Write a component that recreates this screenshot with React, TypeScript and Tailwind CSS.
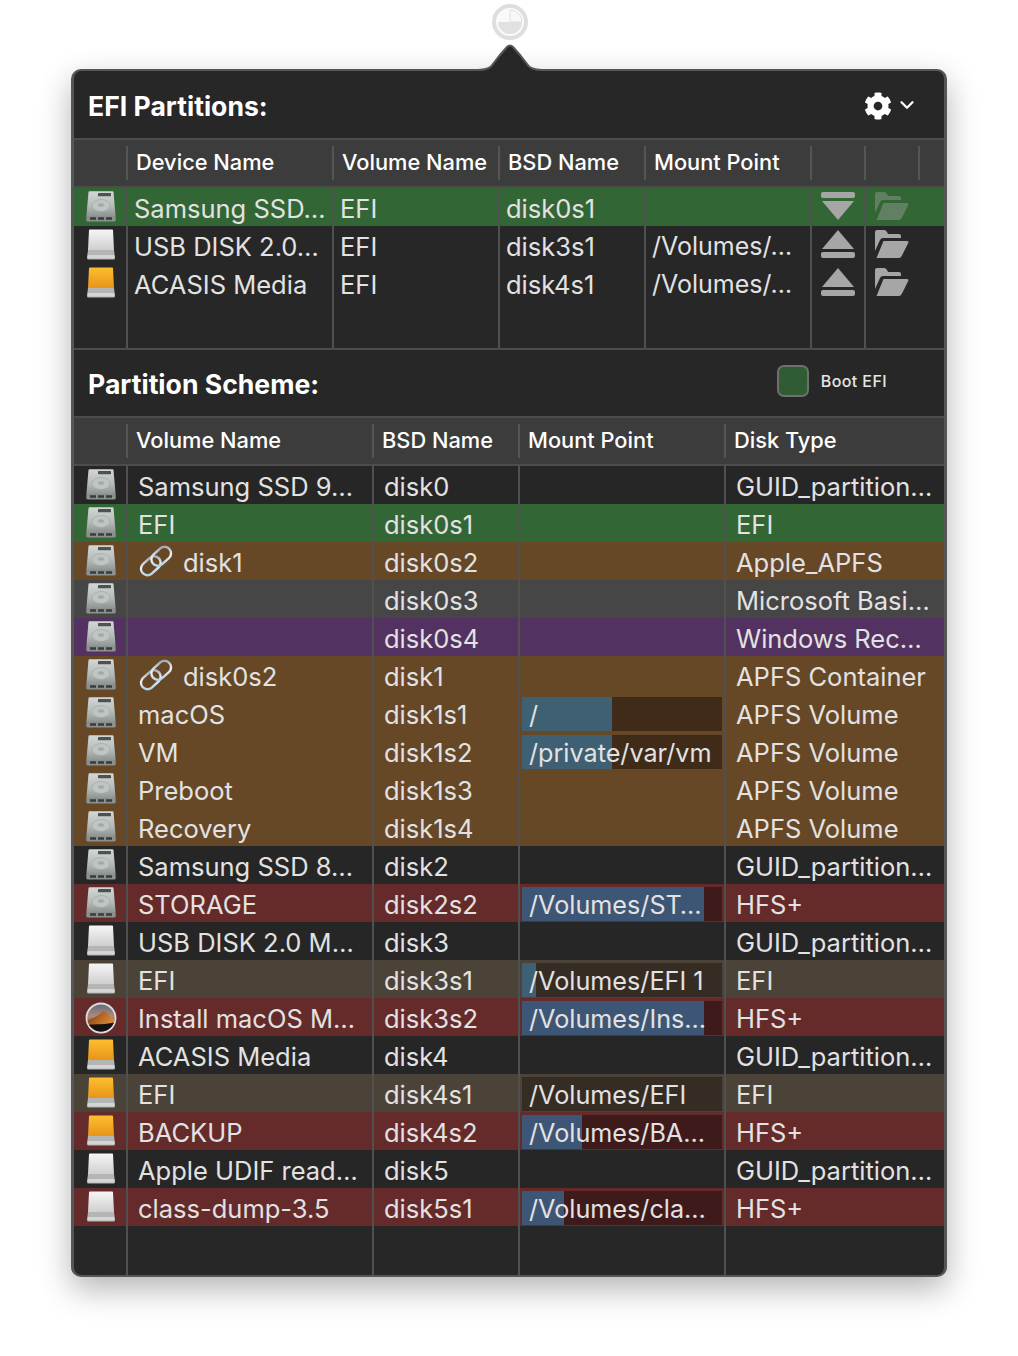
import React from 'react';
import { FaCog } from 'react-icons/fa';
import { ChevronDown } from 'lucide-react';

type DiskKind = 'hdd' | 'usb' | 'orange' | 'mojave';

interface SchemeRow {
  icon: DiskKind;
  name: string;
  link?: boolean;
  bsd: string;
  mount?: string;
  used?: number;
  type: string;
  tone: string;
}

const DARK = 'bg-[#262626]';
const GREEN = 'bg-[#336635]';
const BROWN = 'bg-[#664827]';
const GRAY = 'bg-[#464646]';
const PURPLE = 'bg-[#533261]';
const RED = 'bg-[#652b2b]';
const BEIGE = 'bg-[#4b4238]';

const rows: SchemeRow[] = [
  { icon: 'hdd', name: 'Samsung SSD 9…', bsd: 'disk0', type: 'GUID_partition…', tone: DARK },
  { icon: 'hdd', name: 'EFI', bsd: 'disk0s1', type: 'EFI', tone: GREEN },
  { icon: 'hdd', name: 'disk1', link: true, bsd: 'disk0s2', type: 'Apple_APFS', tone: BROWN },
  { icon: 'hdd', name: '', bsd: 'disk0s3', type: 'Microsoft Basi…', tone: GRAY },
  { icon: 'hdd', name: '', bsd: 'disk0s4', type: 'Windows Rec…', tone: PURPLE },
  { icon: 'hdd', name: 'disk0s2', link: true, bsd: 'disk1', type: 'APFS Container', tone: BROWN },
  { icon: 'hdd', name: 'macOS', bsd: 'disk1s1', mount: '/', used: 90, type: 'APFS Volume', tone: BROWN },
  { icon: 'hdd', name: 'VM', bsd: 'disk1s2', mount: '/private/var/vm', used: 90, type: 'APFS Volume', tone: BROWN },
  { icon: 'hdd', name: 'Preboot', bsd: 'disk1s3', type: 'APFS Volume', tone: BROWN },
  { icon: 'hdd', name: 'Recovery', bsd: 'disk1s4', type: 'APFS Volume', tone: BROWN },
  { icon: 'hdd', name: 'Samsung SSD 8…', bsd: 'disk2', type: 'GUID_partition…', tone: DARK },
  { icon: 'hdd', name: 'STORAGE', bsd: 'disk2s2', mount: '/Volumes/ST…', used: 182, type: 'HFS+', tone: RED },
  { icon: 'usb', name: 'USB DISK 2.0 M…', bsd: 'disk3', type: 'GUID_partition…', tone: DARK },
  { icon: 'usb', name: 'EFI', bsd: 'disk3s1', mount: '/Volumes/EFI 1', used: 14, type: 'EFI', tone: BEIGE },
  { icon: 'mojave', name: 'Install macOS M…', bsd: 'disk3s2', mount: '/Volumes/Ins…', used: 182, type: 'HFS+', tone: RED },
  { icon: 'orange', name: 'ACASIS Media', bsd: 'disk4', type: 'GUID_partition…', tone: DARK },
  { icon: 'orange', name: 'EFI', bsd: 'disk4s1', mount: '/Volumes/EFI', used: 0, type: 'EFI', tone: BEIGE },
  { icon: 'orange', name: 'BACKUP', bsd: 'disk4s2', mount: '/Volumes/BA…', used: 60, type: 'HFS+', tone: RED },
  { icon: 'usb', name: 'Apple UDIF read…', bsd: 'disk5', type: 'GUID_partition…', tone: DARK },
  { icon: 'usb', name: 'class-dump-3.5', bsd: 'disk5s1', mount: '/Volumes/cla…', used: 42, type: 'HFS+', tone: RED },
];

const devices = [
  { icon: 'hdd' as DiskKind, name: 'Samsung SSD…', bsd: 'disk0s1', mount: '', tone: GREEN, mounted: false },
  { icon: 'usb' as DiskKind, name: 'USB DISK 2.0…', bsd: 'disk3s1', mount: '/Volumes/…', tone: '', mounted: true },
  { icon: 'orange' as DiskKind, name: 'ACASIS Media', bsd: 'disk4s1', mount: '/Volumes/…', tone: '', mounted: true },
];

const topCols = 'grid grid-cols-[52px_206px_166px_146px_166px_54px_54px_1fr]';
const bottomCols = 'grid grid-cols-[52px_246px_146px_206px_1fr]';
const sep = 'border-l-2 border-[#505050]';

function DiskIcon({ kind }: { kind: DiskKind }) {
  if (kind === 'mojave') {
    return (
      <svg width="32" height="32" viewBox="0 0 32 32" className="shrink-0">
        <defs>
          <clipPath id="mojaveClip">
            <circle cx="16" cy="16" r="13.6" />
          </clipPath>
          <linearGradient id="mojaveSky" x1="0" y1="0" x2="0" y2="1">
            <stop offset="0" stopColor="#56657f" />
            <stop offset="0.45" stopColor="#b08a78" />
            <stop offset="1" stopColor="#2a1c18" />
          </linearGradient>
          <linearGradient id="mojaveDune" x1="0" y1="0" x2="1" y2="0.4">
            <stop offset="0" stopColor="#6a3619" />
            <stop offset="0.55" stopColor="#b5651f" />
            <stop offset="1" stopColor="#d98a3c" />
          </linearGradient>
        </defs>
        <circle cx="16" cy="16" r="15.4" fill="#dcdde0" />
        <g clipPath="url(#mojaveClip)">
          <rect width="32" height="32" fill="url(#mojaveSky)" />
          <path d="M1 19 C7 17 13 14 17 10 C19 9 21 10 23 12 C26 15 28 17 31 17 V24 H1 Z" fill="url(#mojaveDune)" />
          <path d="M1 23 C10 22 22 23 31 20 V32 H1 Z" fill="#171010" />
        </g>
      </svg>
    );
  }
  if (kind === 'hdd') {
    return (
      <svg width="30" height="31" viewBox="0 0 30 31" className="mb-[4px] shrink-0">
        <defs>
          <linearGradient id="hddBody" x1="0" y1="0" x2="0" y2="1">
            <stop offset="0" stopColor="#d3d8d6" />
            <stop offset="0.6" stopColor="#b4bab8" />
            <stop offset="1" stopColor="#8f9593" />
          </linearGradient>
        </defs>
        <path d="M2.5 1 Q2.6 0.3 3.5 0.3 H26.5 Q27.4 0.3 27.5 1 L29.6 25 H0.4 Z" fill="url(#hddBody)" />
        <rect x="12" y="2" width="13" height="3.2" rx="0.5" fill="#4d5352" />
        <ellipse cx="15" cy="14.5" rx="9" ry="6" fill="#bfc5c3" stroke="#a0a6a4" strokeWidth="0.6" />
        <ellipse cx="15" cy="14" rx="3" ry="1.8" fill="#a3a9a7" />
        <path d="M0.4 25 H29.6 L29.8 29 Q29.8 30.4 28.4 30.4 H1.6 Q0.2 30.4 0.2 29 Z" fill="#8b8f8e" />
        <path d="M4 27.5 H10 M12 27.5 H18 M20 27.5 H26" stroke="#3a3d3c" strokeWidth="2.4" />
      </svg>
    );
  }
  const top = kind === 'usb' ? '#f6f6f6' : '#fdbf2d';
  const bottom = kind === 'usb' ? '#cfcfcf' : '#e8941a';
  const id = kind === 'usb' ? 'usbBody' : 'orangeBody';
  return (
    <svg width="30" height="31" viewBox="0 0 30 31" className="mb-[4px] shrink-0">
      <defs>
        <linearGradient id={id} x1="0" y1="0" x2="0" y2="1">
          <stop offset="0" stopColor={top} />
          <stop offset="1" stopColor={bottom} />
        </linearGradient>
      </defs>
      <path d="M3 1 Q3 0.5 4 0.5 H26 Q27 0.5 27 1 L28 21 H2 Z" fill={`url(#${id})`} />
      <path d="M2 21 H28 L29 29 Q29 30.5 27.5 30.5 H2.5 Q1 30.5 1 29 Z" fill="#b4b6b6" />
      <rect x="1.5" y="26" width="27" height="3.5" rx="1" fill="#d4d6d6" />
    </svg>
  );
}

function LinkIcon() {
  return (
    <svg width="34" height="34" viewBox="0 0 34 34" className="mb-[3px] ml-[1px] shrink-0">
      <defs>
        <linearGradient id="linkSteel" x1="0" y1="1" x2="1" y2="0">
          <stop offset="0" stopColor="#a8cbe8" />
          <stop offset="0.5" stopColor="#eef1f4" />
          <stop offset="1" stopColor="#8c96a8" />
        </linearGradient>
      </defs>
      <g transform="rotate(-42 17 17)" fill="none" stroke="url(#linkSteel)" strokeWidth="2.4">
        <rect x="-1" y="10.5" width="22" height="13" rx="6.5" />
        <rect x="13" y="10.5" width="22" height="13" rx="6.5" />
      </g>
    </svg>
  );
}

function EjectIcon({ flipped }: { flipped?: boolean }) {
  return (
    <svg width="34" height="28" viewBox="0 0 34 28" className={`mb-[4px] ${flipped ? 'rotate-180' : ''}`}>
      <path d="M17 0 L33 19 H1 Z" fill="#a6a6a6" />
      <rect x="0" y="22" width="34" height="6" rx="2" fill="#a6a6a6" />
    </svg>
  );
}

function FolderIcon({ dim }: { dim?: boolean }) {
  return (
    <svg width="34" height="28" viewBox="0 0 34 28" className={`mb-[4px] ${dim ? 'opacity-40' : ''}`}>
      <path d="M0 2 Q0 0 2 0 H9 Q11 0 12 2 L13 4 H24 Q26 4 26 6 V8 H8 Q6 8 5 10 L0 21 Z" fill="#a6a6a6" />
      <path d="M8.5 11 H32 Q34 11 33.2 13 L27 25.5 Q26 28 23.5 28 H1.5 Z" fill="#a6a6a6" />
    </svg>
  );
}

function MountBar({ label, used, tone }: { label: string; used: number; tone: string }) {
  const isRed = tone === RED;
  const track = isRed ? 'bg-[#3f1a1a]' : tone === BEIGE ? 'bg-[#352c24]' : 'bg-[#3f2b17]';
  const fill = isRed ? 'bg-[#3e5675]' : 'bg-[#3f6072]';
  return (
    <div className={`relative ml-[2px] h-[34px] w-[200px] ${track}`}>
      <div className={`absolute inset-y-0 left-0 ${fill}`} style={{ width: used }} />
      <span className="absolute inset-y-0 left-[7px] flex items-center whitespace-nowrap pt-[3px] text-[25.2px]">{label}</span>
    </div>
  );
}

function HeaderBar({ labels, cols }: { labels: string[]; cols: string }) {
  return (
    <div className={`${cols} h-[48px] items-center border-b-2 border-[#4c4c4c] bg-[#3c3c3c] text-[21.8px] font-medium text-white`}>
      <div />
      {labels.map((label, i) => (
        <div key={i} className="flex h-[34px] items-center border-l-2 border-[#555555] pb-[1px] pl-[8px]">
          {label}
        </div>
      ))}
    </div>
  );
}

export default function App() {
  return (
    <div className="flex h-[1356px] w-[1018px] flex-col bg-white font-['Inter','Liberation_Sans',sans-serif]">
      <div className="flex h-[69px] justify-center pt-[4px]">
        <svg width="36" height="36" viewBox="0 0 36 36" className="ml-[2px]">
          <circle cx="18" cy="18" r="16" fill="#fafafa" stroke="#dedede" strokeWidth="4" />
          <path d="M18 18 V6 A12 12 0 1 1 6 18 Z" fill="#e1e1e1" />
          <path d="M18 6 A12 12 0 0 1 30 18 H18 Z" fill="#f8f8f8" stroke="#e1e1e1" strokeWidth="1" />
        </svg>
      </div>

      <div className="relative ml-[71px] w-[876px] rounded-[10px] border-x-[3px] border-y-2 border-[#565656] bg-[#272727] shadow-[0_12px_32px_rgba(0,0,0,0.3)]">
        <svg width="64" height="30" viewBox="0 0 64 30" className="absolute left-[404px] top-[-27px]">
          <path d="M0 27 C9 26 13 24 15 20 L22 11 L29 3 Q32 0 35 3 L42 11 L49 20 C51 24 55 26 64 27 V30 H0 Z" fill="#272727" />
          <path d="M0 26 C9 26 13 24 15 20 L22 11 L29 3 Q32 0 35 3 L42 11 L49 20 C51 24 55 26 64 26" fill="none" stroke="#565656" strokeWidth="2" />
        </svg>

        <div className="flex h-[67px] items-center justify-between pl-[14px] pr-[26px]">
          <div className="pt-[5px] text-[26.6px] font-bold text-white">EFI Partitions:</div>
          <div className="flex items-center gap-[4px] text-white">
            <FaCog size={28} className="mt-[3px]" />
            <ChevronDown size={22} strokeWidth={2.5} />
          </div>
        </div>

        <div className="border-t-2 border-[#4c4c4c]">
          <HeaderBar labels={['Device Name', 'Volume Name', 'BSD Name', 'Mount Point', '', '', '']} cols={topCols} />
        </div>

        <div className="relative h-[160px] text-[25.5px] text-[#e2e2e2]">
          {devices.map(d => (
            <div key={d.bsd} className={`${topCols} h-[38px] items-center ${d.tone}`}>
              <div className="flex justify-center pl-[2px]">
                <DiskIcon kind={d.icon} />
              </div>
              <div className={`flex h-full items-center whitespace-nowrap pl-[6px] pt-[2px] ${sep}`}>{d.name}</div>
              <div className={`flex h-full items-center pl-[6px] pt-[2px] ${sep}`}>EFI</div>
              <div className={`flex h-full items-center pl-[6px] pt-[2px] ${sep}`}>{d.bsd}</div>
              <div className={`flex h-full items-center whitespace-nowrap pl-[6px] pt-[2px] text-[25px] ${sep}`}>{d.mount}</div>
              <div className={`flex h-full items-center justify-center ${sep}`}>
                <EjectIcon flipped={!d.mounted} />
              </div>
              <div className={`flex h-full items-center pl-[9px] ${sep}`}>
                <FolderIcon dim={!d.mounted} />
              </div>
              <div />
            </div>
          ))}
          <div className={`${topCols} h-[46px]`}>
            <div />
            <div className={sep} />
            <div className={sep} />
            <div className={sep} />
            <div className={sep} />
            <div className={sep} />
            <div className={sep} />
            <div />
          </div>
        </div>

        <div className="flex h-[68px] items-center justify-between border-t-2 border-[#4c4c4c] pl-[14px] pr-[57px]">
          <div className="pt-[4px] text-[26.6px] font-bold text-white">Partition Scheme:</div>
          <div className="flex items-center gap-[12px] pb-[4px]">
            <div className="h-[32px] w-[32px] rounded-[7px] border-2 border-[#6f6f6f] bg-[#2f5c33]" />
            <span className="text-[16px] font-medium tracking-[0.4px] text-[#e6e6e6]">Boot EFI</span>
          </div>
        </div>

        <div className="border-t-2 border-[#4c4c4c]">
          <HeaderBar labels={['Volume Name', 'BSD Name', 'Mount Point', 'Disk Type']} cols={bottomCols} />
        </div>

        <div className="overflow-hidden rounded-b-[8px] text-[25.5px] text-[#e2e2e2]">
          {rows.map(r => (
            <div key={r.bsd} className={`${bottomCols} h-[38px] items-center ${r.tone}`}>
              <div className="flex justify-center pl-[2px]">
                <DiskIcon kind={r.icon} />
              </div>
              <div className={`flex h-full items-center whitespace-nowrap pl-[10px] ${sep}`}>
                {r.link && <LinkIcon />}
                <span className={`pt-[2px] ${r.link ? 'ml-[10px]' : ''}`}>{r.name}</span>
              </div>
              <div className={`flex h-full items-center pl-[10px] pt-[2px] ${sep}`}>{r.bsd}</div>
              <div className={`flex h-full items-center ${sep}`}>
                {r.mount && <MountBar label={r.mount} used={r.used ?? 0} tone={r.tone} />}
              </div>
              <div className={`flex h-full items-center whitespace-nowrap pl-[10px] pt-[2px] ${sep}`}>{r.type}</div>
            </div>
          ))}
          <div className={`${bottomCols} h-[49px]`}>
            <div />
            <div className={sep} />
            <div className={sep} />
            <div className={sep} />
            <div className={sep} />
          </div>
        </div>
      </div>
    </div>
  );
}
